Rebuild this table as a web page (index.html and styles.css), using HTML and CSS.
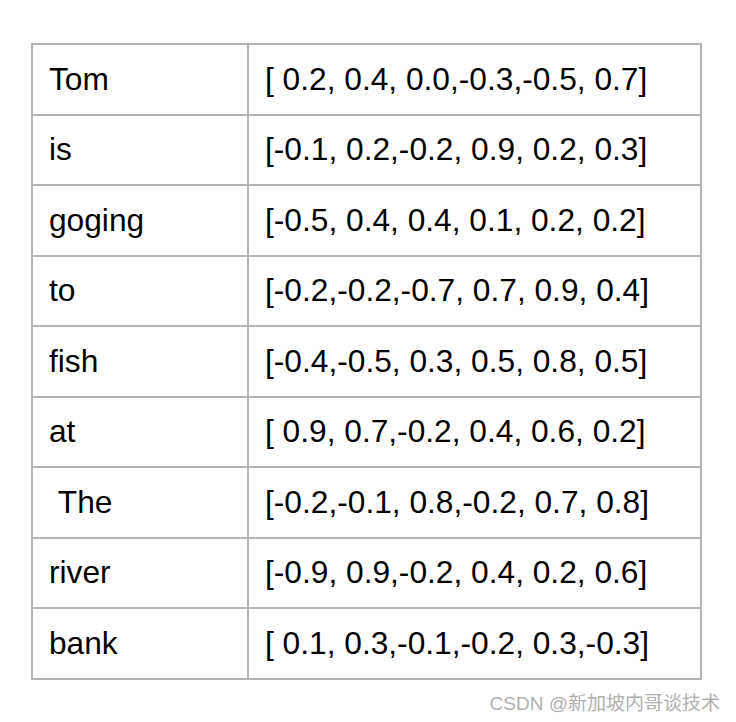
FILE: index.html
```html
<!DOCTYPE html>
<html>
<head>
<meta charset="utf-8">
<link rel="stylesheet" href="styles.css">
</head>
<body>
<div class="page">
  <table class="vec">
    <tr><td class="w">Tom</td><td class="v">[ 0.2, 0.4, 0.0,-0.3,-0.5, 0.7]</td></tr>
    <tr><td class="w">is</td><td class="v">[-0.1, 0.2,-0.2, 0.9, 0.2, 0.3]</td></tr>
    <tr><td class="w">goging</td><td class="v">[-0.5, 0.4, 0.4, 0.1, 0.2, 0.2]</td></tr>
    <tr><td class="w">to</td><td class="v">[-0.2,-0.2,-0.7, 0.7, 0.9, 0.4]</td></tr>
    <tr><td class="w">fish</td><td class="v">[-0.4,-0.5, 0.3, 0.5, 0.8, 0.5]</td></tr>
    <tr><td class="w">at</td><td class="v">[ 0.9, 0.7,-0.2, 0.4, 0.6, 0.2]</td></tr>
    <tr><td class="w">&nbsp;The</td><td class="v">[-0.2,-0.1, 0.8,-0.2, 0.7, 0.8]</td></tr>
    <tr><td class="w">river</td><td class="v">[-0.9, 0.9,-0.2, 0.4, 0.2, 0.6]</td></tr>
    <tr><td class="w">bank</td><td class="v">[ 0.1, 0.3,-0.1,-0.2, 0.3,-0.3]</td></tr>
  </table>
  <div class="mark">CSDN @新加坡内哥谈技术</div>
</div>
</body>
</html>
```
FILE: styles.css
```css
html, body {
  margin: 0;
  padding: 0;
  background: #ffffff;
}
.page {
  width: 736px;
  height: 722px;
  padding: 43px 0 0 31px;
  box-sizing: border-box;
  position: relative;
  font-family: "Liberation Sans", Arial, sans-serif;
}
.vec {
  border-collapse: collapse;
  width: 671px;
  table-layout: fixed;
}
.vec td {
  border: 2px solid #b4b4b4;
  height: 68.5px;
  padding: 0 0 0 16px;
  font-size: 31.7px;
  color: #000;
  vertical-align: middle;
  white-space: pre;
}
.vec td.w {
  width: 198px;
}
.mark {
  position: absolute;
  right: 16px;
  bottom: 7px;
  font-family: "Liberation Sans", "Noto Sans CJK SC", sans-serif;
  font-size: 19px;
  color: #b0b0b0;
}
```
